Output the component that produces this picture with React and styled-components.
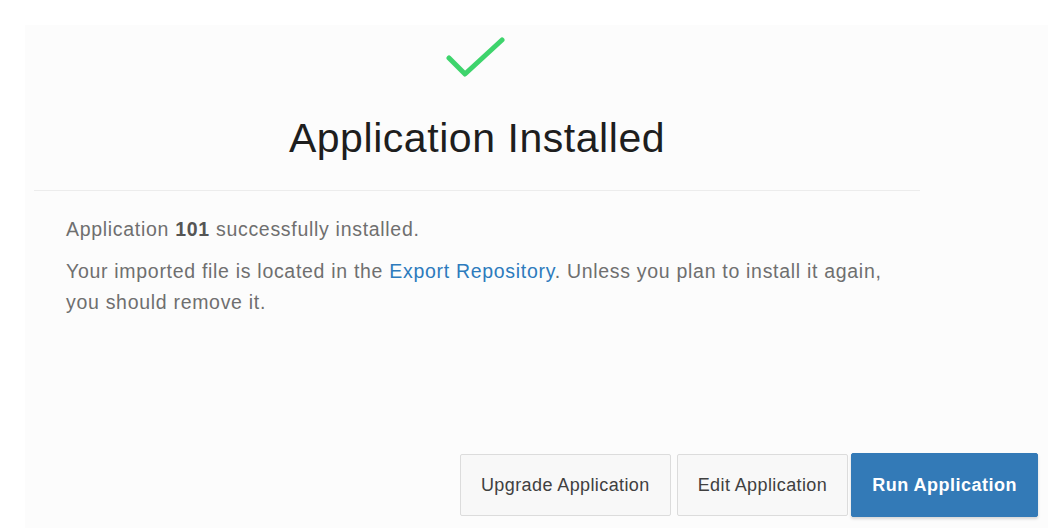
import React from 'react';
import styled, { createGlobalStyle } from 'styled-components';

const GlobalStyle = createGlobalStyle`
  html, body {
    margin: 0;
    padding: 0;
    background: #ffffff;
  }
  body {
    font-family: "Liberation Sans", Arial, sans-serif;
  }
`;

const Page = styled.div`
  width: 1048px;
  height: 528px;
  overflow: hidden;
  padding: 25px 0 0 25px;
  box-sizing: border-box;
  display: flex;
`;

const Panel = styled.div`
  flex: 1;
  background: #fcfcfc;
  display: flex;
  flex-direction: column;
`;

const Header = styled.div`
  width: 886px;
  margin-left: 9px;
  border-bottom: 1px solid #ececec;
  display: flex;
  flex-direction: column;
  align-items: center;
  padding-top: 10px;
  height: 166px;
  box-sizing: border-box;
`;

const Check = styled.svg`
  width: 64px;
  height: 48px;
  margin-left: 2px;
`;

const Title = styled.h1`
  margin: 31px 0 0;
  font-size: 41px;
  font-weight: 400;
  color: #1e1e1e;
  line-height: 48px;
  letter-spacing: 0.55px;
`;

const Body = styled.div`
  padding: 23px 0 0 41px;
  width: 840px;
`;

const Para = styled.p`
  margin: 0 0 ${p => p.gap || 0}px;
  font-size: 19.5px;
  letter-spacing: 0.7px;
  line-height: 31px;
  color: #6f6f6f;
  b {
    color: #555;
  }
  a {
    color: #2d7bbd;
    text-decoration: none;
  }
`;

const Actions = styled.div`
  margin-top: auto;
  display: flex;
  justify-content: flex-end;
  align-items: center;
  padding: 0 10px 11px 0;
`;

const Button = styled.button`
  height: 62px;
  box-sizing: border-box;
  padding: 0 20px;
  margin-left: ${p => p.gap || 0}px;
  font-family: "Liberation Sans", Arial, sans-serif;
  font-size: 18px;
  letter-spacing: ${p => (p.primary ? 0.5 : 0.4)}px;
  border-radius: 2px;
  cursor: pointer;
  border: 1px solid ${p => (p.primary ? '#337ab7' : '#dcdcdc')};
  background: ${p => (p.primary ? '#337ab7' : '#f8f8f8')};
  color: ${p => (p.primary ? '#ffffff' : '#404040')};
  font-weight: ${p => (p.primary ? 700 : 400)};
  box-shadow: ${p => (p.primary ? '0 2px 3px rgba(0,0,0,0.15)' : 'none')};
  ${p => p.primary && 'height: 64px;'}
`;

export default function App() {
  return (
    <>
      <GlobalStyle />
      <Page>
        <Panel>
          <Header>
            <Check viewBox="0 0 64 48">
              <path
                d="M3 23 L19 39 L56 5"
                fill="none"
                stroke="#3ed46c"
                strokeWidth="5"
                strokeLinecap="round"
                strokeLinejoin="round"
              />
            </Check>
            <Title>Application Installed</Title>
          </Header>
          <Body>
            <Para gap={11}>
              Application <b>101</b> successfully installed.
            </Para>
            <Para>
              Your imported file is located in the <a href="#">Export Repository</a>. Unless you plan to install it again,
              you should remove it.
            </Para>
          </Body>
          <Actions>
            <Button>Upgrade Application</Button>
            <Button gap={6}>Edit Application</Button>
            <Button gap={3} primary>Run Application</Button>
          </Actions>
        </Panel>
      </Page>
    </>
  );
}
